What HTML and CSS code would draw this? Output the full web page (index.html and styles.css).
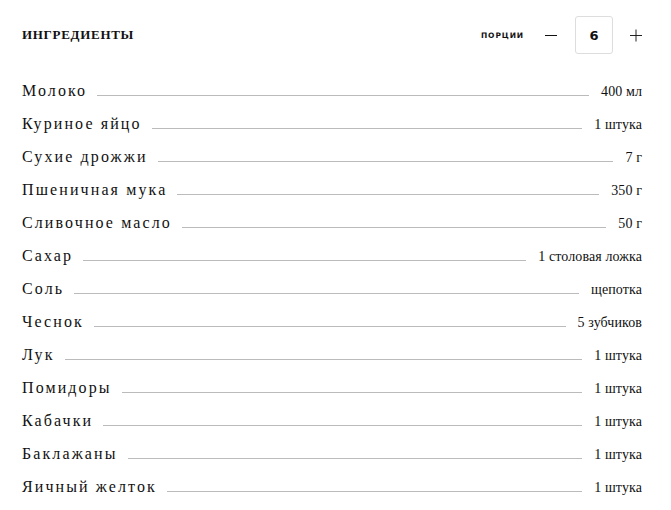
FILE: index.html
```html
<!DOCTYPE html>
<html lang="ru">
<head>
<meta charset="utf-8">
<link rel="stylesheet" href="styles.css">
</head>
<body>
<div class="recipe">
  <div class="head">
    <h2 class="title">Ингредиенты</h2>
    <div class="portions">
      <span class="portions-label">порции</span>
      <button class="step" aria-label="minus"><svg width="12" height="12" viewBox="0 0 12 12"><path d="M0 6.5H12" stroke="#111" stroke-width="1"/></svg></button>
      <div class="count">6</div>
      <button class="step" aria-label="plus"><svg width="13" height="13" viewBox="0 0 13 13"><path d="M0 6.5H13M6.5 0V13" stroke="#111" stroke-width="1"/></svg></button>
    </div>
  </div>
  <ul class="list">
    <li class="row"><span class="name">Молоко</span><span class="leader"></span><span class="amount">400 мл</span></li>
    <li class="row"><span class="name">Куриное яйцо</span><span class="leader"></span><span class="amount">1 штука</span></li>
    <li class="row"><span class="name">Сухие дрожжи</span><span class="leader"></span><span class="amount">7 г</span></li>
    <li class="row"><span class="name">Пшеничная мука</span><span class="leader"></span><span class="amount">350 г</span></li>
    <li class="row"><span class="name">Сливочное масло</span><span class="leader"></span><span class="amount">50 г</span></li>
    <li class="row"><span class="name">Сахар</span><span class="leader"></span><span class="amount">1 столовая ложка</span></li>
    <li class="row"><span class="name">Соль</span><span class="leader"></span><span class="amount">щепотка</span></li>
    <li class="row"><span class="name">Чеснок</span><span class="leader"></span><span class="amount">5 зубчиков</span></li>
    <li class="row"><span class="name">Лук</span><span class="leader"></span><span class="amount">1 штука</span></li>
    <li class="row"><span class="name">Помидоры</span><span class="leader"></span><span class="amount">1 штука</span></li>
    <li class="row"><span class="name">Кабачки</span><span class="leader"></span><span class="amount">1 штука</span></li>
    <li class="row"><span class="name">Баклажаны</span><span class="leader"></span><span class="amount">1 штука</span></li>
    <li class="row"><span class="name">Яичный желток</span><span class="leader"></span><span class="amount">1 штука</span></li>
  </ul>
</div>
</body>
</html>
```
FILE: styles.css
```css
html, body {
  margin: 0;
  padding: 0;
  background: #fff;
}
.recipe {
  padding: 16px 29px 0 22px;
  color: #111;
  font-family: "Liberation Serif", serif;
}
.head {
  display: flex;
  align-items: center;
  justify-content: space-between;
  height: 38px;
}
.title {
  margin: 0;
  font-size: 13px;
  font-weight: bold;
  text-transform: uppercase;
  letter-spacing: 0.7px;
}
.portions {
  display: flex;
  align-items: center;
}
.portions-label {
  font-family: "DejaVu Sans", sans-serif;
  font-size: 7.5px;
  font-weight: bold;
  text-transform: uppercase;
  letter-spacing: 0.9px;
  margin-right: 21px;
}
.step {
  border: 0;
  background: none;
  padding: 0;
  width: 12px;
  height: 13px;
  display: flex;
  align-items: center;
  justify-content: center;
}
.count {
  width: 36px;
  height: 36px;
  border: 1px solid #ddd;
  border-radius: 3px;
  margin: 0 17px 0 18px;
  display: flex;
  align-items: center;
  justify-content: center;
  font-family: "DejaVu Sans", sans-serif;
  font-weight: bold;
  font-size: 13px;
}
.list {
  list-style: none;
  margin: 20px 0 0;
  padding: 0;
}
.row {
  display: flex;
  align-items: baseline;
  height: 33px;
  line-height: 33px;
}
.name {
  font-size: 16px;
  letter-spacing: 2.1px;
}
.leader {
  flex: 1;
  height: 0;
  border-bottom: 1px solid #bbb;
  margin: 0 12px 1px 10px;
}
.amount {
  font-size: 14px;
  letter-spacing: 0.1px;
}
```
